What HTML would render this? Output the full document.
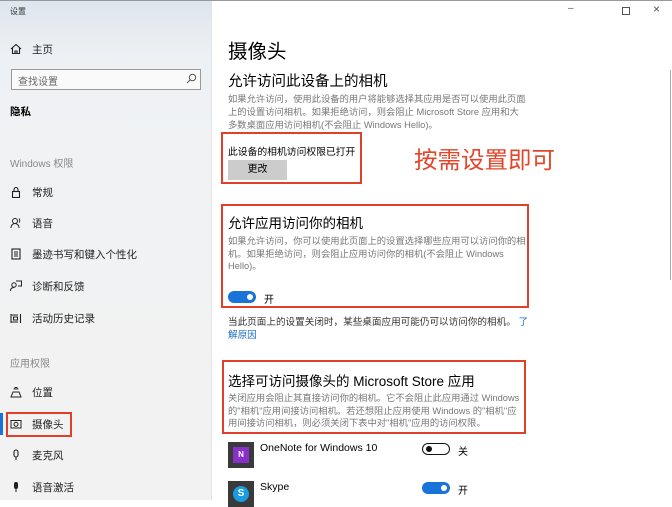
<!DOCTYPE html>
<html><head><meta charset="utf-8"><style>
*{margin:0;padding:0;box-sizing:border-box}
body{width:672px;height:500px;overflow:hidden;position:relative;background:#fff;font-family:"Liberation Sans","Noto Sans CJK SC",sans-serif;color:#000}
.a{position:absolute;white-space:nowrap}
#side{position:absolute;left:0;top:0;width:212px;height:500px;background:linear-gradient(180deg,#dde5ee 0,#eef1f4 60px,#f1f2f3 200px,#f2f2f2 100%)}
.s{font-size:10.5px;color:#222}
.ic{position:absolute;left:10px;width:12px;height:12px}
.g{color:#888;font-size:10px}
.d{font-size:9.3px;color:#777;line-height:13px}
.box{position:absolute;border:2.5px solid #e0402a}
.tg{position:absolute;width:28px;height:12px;border-radius:6px}
.tg.on{background:#1a73d8}
.tg.on::after{content:"";position:absolute;right:3px;top:3px;width:6px;height:6px;border-radius:50%;background:#fff}
.tg.off{border:1.5px solid #111;background:#fff}
.tg.off::after{content:"";position:absolute;left:3px;top:2px;width:6px;height:6px;border-radius:50%;background:#111}
</style></head><body>
<div id="side">
<div class="a" style="left:10px;top:6px;font-size:8px;color:#333">设置</div>
<svg class="ic" style="top:43px" viewBox="0 0 12 12" fill="none" stroke="#222" stroke-width="1.1"><path d="M1 6L6 1.5 11 6M2.5 5v5.5h7V5M5 10.5V8h2v2.5"/></svg>
<div class="a s" style="left:32px;top:42px">主页</div>
<div class="a" style="left:11px;top:69px;width:190px;height:21px;border:1.5px solid #999;background:#fafafa"></div>
<div class="a" style="left:18px;top:73px;font-size:10px;color:#666">查找设置</div>
<svg class="a" style="left:186px;top:73px;width:11px;height:11px" viewBox="0 0 11 11" fill="none" stroke="#555"><circle cx="6.5" cy="4.5" r="3.2"/><path d="M4.2 6.8L1 10"/></svg>
<div class="a" style="left:10px;top:104px;font-size:10.5px;font-weight:bold">隐私</div>
<div class="a g" style="left:10px;top:155px">Windows 权限</div>
<svg class="ic" style="top:186px" viewBox="0 0 12 12" fill="none" stroke="#222" stroke-width="1.1"><rect x="2.5" y="5.5" width="7" height="6"/><path d="M4 5.5V3.5a2 2 0 0 1 4 0v2"/></svg>
<div class="a s" style="left:32px;top:185px">常规</div>
<svg class="ic" style="top:217px" viewBox="0 0 12 12" fill="none" stroke="#222" stroke-width="1"><circle cx="5" cy="4" r="2.5"/><path d="M1 11c0-3 2-4.5 4-4.5s4 1.5 4 4.5M9 1.5a3 3 0 0 1 0 4"/></svg>
<div class="a s" style="left:32px;top:216px">语音</div>
<svg class="ic" style="top:248px" viewBox="0 0 12 12" fill="none" stroke="#222" stroke-width="1.1"><rect x="2" y="1" width="8" height="10"/><path d="M4 4h4M4 6h4M4 8h4"/></svg>
<div class="a s" style="left:32px;top:247px">墨迹书写和键入个性化</div>
<svg class="ic" style="top:280px" viewBox="0 0 12 12" fill="none" stroke="#222" stroke-width="1"><circle cx="4" cy="5" r="2.2"/><path d="M0.5 11c0-2.5 1.5-3.5 3.5-3.5M6 1h5.5v5H8"/></svg>
<div class="a s" style="left:32px;top:279px">诊断和反馈</div>
<svg class="ic" style="top:312px" viewBox="0 0 12 12" fill="none" stroke="#222" stroke-width="1.1"><path d="M1 2v9M1 3h7M1 10h7M3.5 5h4v3h-4zM10.5 2v9"/></svg>
<div class="a s" style="left:32px;top:311px">活动历史记录</div>
<div class="a g" style="left:10px;top:355px">应用权限</div>
<svg class="ic" style="top:386px" viewBox="0 0 12 12" fill="none" stroke="#222" stroke-width="1"><path d="M6 1v3M4 3.5a2 2 0 0 1 4 0M3 6h6l2 5H1z"/></svg>
<div class="a s" style="left:32px;top:385px">位置</div>
<div class="a" style="left:0;top:413px;width:3px;height:22px;background:#1a73d8"></div>
<div class="box" style="left:6px;top:412px;width:66px;height:25px"></div>
<svg class="ic" style="top:418px" viewBox="0 0 12 12" fill="none" stroke="#222" stroke-width="1"><rect x="1" y="2.5" width="10" height="7.5"/><circle cx="6" cy="6.3" r="2"/></svg>
<div class="a s" style="left:32px;top:417px">摄像头</div>
<svg class="ic" style="top:449px" viewBox="0 0 12 12" fill="none" stroke="#222" stroke-width="1.1"><rect x="4" y="1" width="4" height="7" rx="2"/><path d="M6 8v3"/></svg>
<div class="a s" style="left:32px;top:448px">麦克风</div>
<svg class="ic" style="top:481px" viewBox="0 0 12 12" fill="#222"><rect x="4" y="1" width="4" height="7" rx="2"/><rect x="5.5" y="8" width="1" height="3"/></svg>
<div class="a s" style="left:32px;top:480px">语音激活</div>
</div>
<div class="a" style="left:211px;top:0;width:1px;height:500px;background:#e4e4e4"></div>
<div class="a" style="left:0;top:0;width:672px;height:1px;background:#999"></div>
<div class="a" style="left:568px;top:3px;font-size:10px;color:#555">–</div>
<div class="a" style="left:622px;top:7px;width:8px;height:8px;border:1px solid #555"></div>
<div class="a" style="left:653px;top:2px;font-size:12px;color:#555">×</div>
<div class="a" style="left:670px;top:70px;width:1px;height:210px;background:#aaa"></div>

<div class="a" style="left:228px;top:35px;font-size:19.5px">摄像头</div>
<div class="a" style="left:228px;top:70px;font-size:14.5px">允许访问此设备上的相机</div>
<div class="a d" style="left:228px;top:93px">如果允许访问，使用此设备的用户将能够选择其应用是否可以使用此页面<br>上的设置访问相机。如果拒绝访问，则会阻止 Microsoft Store 应用和大<br>多数桌面应用访问相机(不会阻止 Windows Hello)。</div>
<div class="box" style="left:221px;top:132px;width:141px;height:52px"></div>
<div class="a" style="left:228px;top:144px;font-size:9.8px">此设备的相机访问权限已打开</div>
<div class="a" style="left:228px;top:160px;width:59px;height:20px;background:#ccc;font-size:10px;text-align:center;line-height:20px">更改</div>
<div class="a" style="left:414px;top:141px;font-size:23.5px;color:#e2452a">按需设置即可</div>

<div class="box" style="left:221px;top:204px;width:308px;height:104px"></div>
<div class="a" style="left:228px;top:212px;font-size:13.5px">允许应用访问你的相机</div>
<div class="a d" style="left:228px;top:235px;line-height:12.5px">如果允许访问，你可以使用此页面上的设置选择哪些应用可以访问你的相<br>机。如果拒绝访问，则会阻止应用访问你的相机(不会阻止 Windows<br>Hello)。</div>
<div class="tg on" style="left:228px;top:291px"></div>
<div class="a" style="left:264px;top:291px;font-size:10px">开</div>
<div class="a" style="left:228px;top:316px;font-size:9.6px;color:#333;line-height:13px">当此页面上的设置关闭时，某些桌面应用可能仍可以访问你的相机。 <span style="color:#1a6fc9">了</span><br><span style="color:#1a6fc9">解原因</span></div>

<div class="box" style="left:222px;top:360px;width:304px;height:74px"></div>
<div class="a" style="left:228px;top:370px;font-size:13.5px">选择可访问摄像头的 Microsoft Store 应用</div>
<div class="a d" style="left:228px;top:392px;line-height:12.5px">关闭应用会阻止其直接访问你的相机。它不会阻止此应用通过 Windows<br>的"相机"应用间接访问相机。若还想阻止应用使用 Windows 的"相机"应<br>用间接访问相机，则必须关闭下表中对"相机"应用的访问权限。</div>

<div class="a" style="left:228px;top:442px;width:26px;height:26px;background:#3a3a3a"></div>
<div class="a" style="left:233px;top:447px;width:16px;height:16px;background:#8a2fc9;color:#fff;font-size:8px;font-weight:bold;text-align:center;line-height:16px">N</div>
<div class="a" style="left:260px;top:442px;font-size:10.5px">OneNote for Windows 10</div>
<div class="tg off" style="left:422px;top:443px"></div>
<div class="a" style="left:458px;top:443px;font-size:10px">关</div>
<div class="a" style="left:228px;top:481px;width:26px;height:26px;background:#3a3a3a"></div>
<div class="a" style="left:233px;top:486px;width:16px;height:16px;border-radius:50%;background:#1a9ce0;color:#fff;font-size:10px;font-weight:bold;text-align:center;line-height:16px">S</div>
<div class="a" style="left:260px;top:481px;font-size:10.5px">Skype</div>
<div class="tg on" style="left:422px;top:482px"></div>
<div class="a" style="left:458px;top:482px;font-size:10px">开</div>
</body></html>
